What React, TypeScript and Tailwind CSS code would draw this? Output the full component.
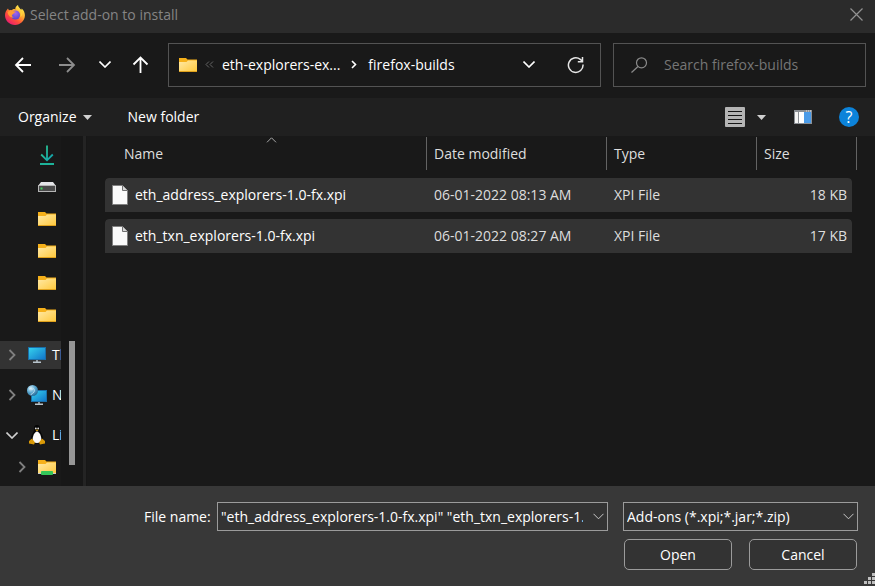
import type { ReactNode } from "react";

const files = [
  { name: "eth_address_explorers-1.0-fx.xpi", date: "06-01-2022 08:13 AM", type: "XPI File", size: "18 KB" },
  { name: "eth_txn_explorers-1.0-fx.xpi", date: "06-01-2022 08:27 AM", type: "XPI File", size: "17 KB" },
];

function FirefoxLogo() {
  return (
    <svg width="20" height="20" viewBox="0 0 20 20" aria-hidden="true">
      <defs>
        <linearGradient id="ffBody" x1="0.85" y1="0.1" x2="0.2" y2="0.95">
          <stop offset="0" stopColor="#fff44f" />
          <stop offset="0.35" stopColor="#ffa930" />
          <stop offset="0.65" stopColor="#ff5038" />
          <stop offset="1" stopColor="#e81a72" />
        </linearGradient>
        <radialGradient id="ffGlobe" cx="0.5" cy="0.3" r="0.8">
          <stop offset="0" stopColor="#a465f0" />
          <stop offset="1" stopColor="#4a42c8" />
        </radialGradient>
      </defs>
      <path d="M3 3.500c.4 1 .8 1.500 1.200 1.800C5 5 6 5 6.800 5.200 8 3.800 9.300 4 10.300 4.500 10 2.500 11.500.8 13 0c.2 2.200 2 3.200 3.200 4.800.4-.3.500-.8.400-1.300C19 5.500 20 8 19.900 10.600 19.700 15.900 15.400 20 10 20 4.500 20 0 15.800 0 10.300 0 7.500 1.200 5.200 3 3.500z" fill="url(#ffBody)" />
      <circle cx="10.500" cy="10" r="4.600" fill="url(#ffGlobe)" />
      <path d="M2.500 7.500c1.600-2 4-2.500 5.600-1.300 1.200.2 2.200.1 2.700.4-.1.800-1.200 1.200-2 1.600-.3 1-1.500 1-2 2 .3 1.200 1 1.800 2 2.200-2.500.8-5.300-.8-6.300-4.900z" fill="#ff9a34" />
      <path d="M12.500 3.500c3 2.500 4 5 2.800 8.500 1.500-.8 2.300-2.600 2.200-4.500-.8-1.800-2.800-3-5-4z" fill="#ffd23c" />
    </svg>
  );
}

function FolderIcon({ shared = false }: { shared?: boolean }) {
  return (
    <svg width="18" height="16" viewBox="0 0 18 16" aria-hidden="true" className="shrink-0">
      <defs>
        <linearGradient id="folderFront" x1="0" y1="0" x2="1" y2="1">
          <stop offset="0" stopColor="#ffe9a6" />
          <stop offset="1" stopColor="#ffc83a" />
        </linearGradient>
      </defs>
      <path d="M0 1h7l1.500 1.500H18V8H0z" fill="#f5b01a" />
      <path d="M0 5h7.500L9 3.500h9V15H0z" fill="url(#folderFront)" />
      <path d="M0 14.500h18" stroke="#e0a11c" />
      {shared && (
        <>
          <path d="M0 14.500h18" stroke="#c9cdd0" />
          <rect x="3" y="12" width="12" height="4" rx="1" fill="#35c759" />
        </>
      )}
    </svg>
  );
}

function DownloadIcon() {
  return (
    <svg width="18" height="22" viewBox="0 0 18 22" aria-hidden="true">
      <defs>
        <linearGradient id="dl" x1="0" y1="0" x2="1" y2="1">
          <stop offset="0" stopColor="#2fc98a" />
          <stop offset="1" stopColor="#0f9fb0" />
        </linearGradient>
      </defs>
      <path d="M9 1.500V16M3.200 10.500 9 16.300l5.800-5.800" fill="none" stroke="url(#dl)" strokeWidth="1.800" />
      <rect x="2" y="19" width="14" height="2" fill="#1db39a" />
    </svg>
  );
}

function DriveIcon() {
  return (
    <svg width="18" height="10" viewBox="0 0 18 10" aria-hidden="true">
      <path d="M3 0h12l3 4H0z" fill="#e4e5e8" />
      <rect x="0.500" y="3.500" width="17" height="6" fill="#4a4a4a" stroke="#b5b5b5" />
      <rect x="2.500" y="5.500" width="2" height="2" fill="#3fd45a" />
    </svg>
  );
}

function MonitorIcon() {
  return (
    <svg width="18" height="16" viewBox="0 0 18 16" aria-hidden="true" className="shrink-0">
      <defs>
        <linearGradient id="screen" x1="0" y1="0" x2="1" y2="1">
          <stop offset="0" stopColor="#35d3ee" />
          <stop offset="1" stopColor="#1173c8" />
        </linearGradient>
      </defs>
      <rect x="0.500" y="0.500" width="17" height="12" fill="url(#screen)" stroke="#1a6ea8" />
      <path d="M9 13v2M5 15.200h8" stroke="#b8c4cc" strokeWidth="1.400" />
    </svg>
  );
}

function NetworkIcon() {
  return (
    <svg width="20" height="20" viewBox="0 0 20 20" aria-hidden="true" className="shrink-0">
      <defs>
        <radialGradient id="globe" cx="0.350" cy="0.300" r="0.800">
          <stop offset="0" stopColor="#d8f0fa" />
          <stop offset="0.500" stopColor="#5ba7cf" />
          <stop offset="1" stopColor="#1c5d8c" />
        </radialGradient>
      </defs>
      <rect x="4.500" y="5.500" width="15" height="11" fill="url(#screen)" stroke="#1a6ea8" />
      <path d="M12 17v2M8 19.200h8" stroke="#b8c4cc" strokeWidth="1.400" />
      <circle cx="5.500" cy="5.500" r="5.500" fill="url(#globe)" />
      <path d="M2 4c2-1 3 1 4 0s2 1 1 3-3 1-3 3" fill="none" stroke="#e8f7ff" strokeOpacity="0.600" />
    </svg>
  );
}

function PenguinIcon() {
  return (
    <svg width="18" height="20" viewBox="0 0 18 20" aria-hidden="true" className="shrink-0">
      <path d="M9 0C6.500 0 5.800 2 6 4.500 6 7 3.500 9 3 13c-.2 2.500 1 5 3 5.500h6c2.500-.5 3.300-3 3-5.500-.5-4-3-6-3-8.500C12.200 2 11.500 0 9 0z" fill="#050505" />
      <path d="M9 6.500c-2.500.5-4.300 4.500-4.300 7.500S6.500 18 9 18s4.300-1 4.300-4S11.500 7 9 6.500z" fill="#fafafa" />
      <circle cx="7.800" cy="3.400" r="0.900" fill="#ddd" />
      <circle cx="10.200" cy="3.400" r="0.900" fill="#ddd" />
      <path d="M7.200 4.800h3.600L9 6.300z" fill="#e8a90a" />
      <path d="M1 16l3-2.500 3 4-1 2-5-1zM17 16l-3-2.500-3 4 1 2 5-1z" fill="#d99a08" />
    </svg>
  );
}

function FileIcon() {
  return (
    <svg width="16" height="20" viewBox="0 0 16 20" aria-hidden="true" className="shrink-0">
      <path d="M.5.5h10l5 5v14H.5z" fill="#fafafa" stroke="#808080" />
      <path d="M10.500.5v5h5" fill="#d8d8d8" stroke="#707070" />
    </svg>
  );
}

function Chevron({ dir }: { dir: "down" | "right" }) {
  return dir === "down" ? (
    <svg width="12" height="7" viewBox="0 0 12 7" aria-hidden="true">
      <path d="M.5.500l5.500 5.500L11.500.500" fill="none" stroke="currentColor" strokeWidth="1.600" />
    </svg>
  ) : (
    <svg width="8" height="12" viewBox="0 0 8 12" aria-hidden="true">
      <path d="M1.500 1l5 5-5 5" fill="none" stroke="currentColor" strokeWidth="1.800" />
    </svg>
  );
}

function ThinChevron() {
  return (
    <svg width="11" height="7" viewBox="0 0 11 7" aria-hidden="true">
      <path d="M.5.800l5 5 5-5" fill="none" stroke="#c8c8c8" />
    </svg>
  );
}

function Triangle() {
  return (
    <svg width="9" height="5" viewBox="0 0 9 5" aria-hidden="true">
      <path d="M0 0h9L4.500 5z" fill="#d0d0d0" />
    </svg>
  );
}

function IconButton({ label, className, children }: { label: string; className: string; children: ReactNode }) {
  return (
    <button type="button" aria-label={label} className={`flex shrink-0 items-center justify-center ${className}`}>
      {children}
    </button>
  );
}

function QuickItem({ label, children }: { label: string; children: ReactNode }) {
  return (
    <li className="flex h-8 items-center">
      <button type="button" aria-label={label} className="ml-9 flex w-[22px] justify-center">
        {children}
      </button>
    </li>
  );
}

function TreeItem({ text, selected = false, open = false, children }: { text: string; selected?: boolean; open?: boolean; children: ReactNode }) {
  return (
    <li className="flex h-8 items-center">
      <button type="button" className={`flex h-7 w-full items-center whitespace-nowrap ${selected ? "bg-[#333333]" : ""}`}>
        <span className={`ml-1.5 flex w-3 shrink-0 justify-center ${open ? "text-[#d0d0d0]" : "text-[#808080]"}`}>
          <Chevron dir={open ? "down" : "right"} />
        </span>
        <span className="ml-2 mr-1 flex w-[22px] shrink-0 justify-center">{children}</span>
        <span className="text-white">{text}</span>
      </button>
    </li>
  );
}

export default function App() {
  return (
    <div className="flex h-screen flex-col overflow-hidden bg-[#191919] font-['Open_Sans','Noto_Sans',sans-serif] text-sm leading-5 text-white">
      <header className="flex h-[33px] shrink-0 items-center bg-[#2b2b2b] pb-1 pl-[5px] pr-3">
        <FirefoxLogo />
        <h1 className="ml-[5px] flex-1 text-[#858585]">Select add-on to install</h1>
        <IconButton label="Close" className="">
          <svg width="13" height="13" viewBox="0 0 13 13" aria-hidden="true">
            <path d="M.5.5l12 12M12.500.5l-12 12" stroke="#929292" strokeWidth="1.200" />
          </svg>
        </IconButton>
      </header>

      <nav aria-label="Location" className="flex h-[65px] shrink-0 items-center gap-4 pb-0.5 pl-[9px] pr-[9px]">
        <IconButton label="Back" className="h-7 w-7">
          <svg width="18" height="16" viewBox="0 0 18 16" fill="none" stroke="#fff" strokeWidth="1.800" aria-hidden="true">
            <path d="M17 8H2M9 1L2 8l7 7" />
          </svg>
        </IconButton>
        <IconButton label="Forward" className="h-7 w-7">
          <svg width="18" height="16" viewBox="0 0 18 16" fill="none" stroke="#8d8d8d" strokeWidth="1.800" aria-hidden="true">
            <path d="M1 8h15M9 1l7 7-7 7" />
          </svg>
        </IconButton>
        <IconButton label="Recent locations" className="h-7 w-4">
          <Chevron dir="down" />
        </IconButton>
        <IconButton label="Up" className="h-7 w-[23px]">
          <svg width="17" height="17" viewBox="0 0 17 17" fill="none" stroke="#fff" strokeWidth="1.800" aria-hidden="true">
            <path d="M8.500 17V2M1.500 8.500l7-7 7 7" />
          </svg>
        </IconButton>
        <div className="flex h-11 min-w-0 flex-1 gap-3">
          <div className="flex min-w-0 flex-1 items-center border border-[#535353] pl-2.5 pr-4">
            <FolderIcon />
            <svg width="9" height="7" viewBox="0 0 9 7" fill="none" stroke="#666" aria-hidden="true" className="mx-2 shrink-0">
              <path d="M4 .500l-3 3 3 3M8 .500l-3 3 3 3" />
            </svg>
            <button type="button" className="whitespace-nowrap">eth-explorers-ex...</button>
            <svg width="6" height="9" viewBox="0 0 6 9" fill="none" stroke="#fff" strokeWidth="1.600" aria-hidden="true" className="mx-[11px] shrink-0">
              <path d="M1 1l3.500 3.500L1 8" />
            </svg>
            <button type="button" className="whitespace-nowrap">firefox-builds</button>
            <IconButton label="Previous locations" className="ml-auto">
              <Chevron dir="down" />
            </IconButton>
            <IconButton label="Refresh" className="ml-8">
              <svg width="17" height="18" viewBox="0 0 17 18" fill="none" stroke="#e6e6e6" strokeWidth="1.500" aria-hidden="true">
                <path d="M16 8.500A7.300 7.300 0 1 1 13.300 3.400L15.500 5.300M15.500 1v4.700h-4.700" />
              </svg>
            </IconButton>
          </div>
          <label className="flex w-[253px] items-center border border-[#535353] pl-4 pr-2">
            <svg width="18" height="16" viewBox="0 0 18 16" fill="none" stroke="#8a8a8a" strokeWidth="1.200" aria-hidden="true" className="shrink-0">
              <circle cx="11.500" cy="5.800" r="5" />
              <path d="M8 9.500L1.500 15.500" />
            </svg>
            <input type="search" aria-label="Search firefox-builds" placeholder="Search firefox-builds" className="ml-4 min-w-0 flex-1 bg-transparent outline-none placeholder:text-[#767676]" />
          </label>
        </div>
      </nav>

      <div role="toolbar" aria-label="Folder actions" className="flex h-[38px] shrink-0 items-center bg-[#202020] pl-[18px] pr-4">
        <button type="button" className="flex items-center gap-1.5">
          Organize <Triangle />
        </button>
        <button type="button" className="ml-9">New folder</button>
        <IconButton label="Change view" className="ml-auto">
          <svg width="20" height="20" viewBox="0 0 20 20" aria-hidden="true">
            <rect width="20" height="20" rx="1" fill="#b4b4b4" />
            <path d="M3 4.500h14M3 8.500h14M3 12.500h14M3 16.500h14" stroke="#151515" />
          </svg>
        </IconButton>
        <IconButton label="View options" className="ml-3">
          <Triangle />
        </IconButton>
        <IconButton label="Preview pane" className="ml-7">
          <svg width="18" height="14" viewBox="0 0 18 14" aria-hidden="true">
            <rect width="18" height="14" fill="#8b8f94" />
            <rect x="1" y="2" width="3" height="11" fill="#f4f4f4" />
            <rect x="5" y="2" width="5" height="11" fill="#fff" />
            <rect x="10" y="2" width="7" height="11" fill="#4a9be8" />
            <path d="M12 1h1M14 1h1M16 1h1" stroke="#e6e6e6" />
          </svg>
        </IconButton>
        <button type="button" aria-label="Help" className="ml-[27px] h-5 w-5 rounded-full bg-[#0c83da] text-center text-base leading-5">
          ?
        </button>
      </div>

      <main className="flex min-h-0 flex-1">
        <aside className="flex w-[87px] shrink-0 bg-[#171717]">
          <ul className="w-[61px] shrink-0 overflow-hidden bg-[#191919] pt-[3px]">
            <QuickItem label="Downloads"><DownloadIcon /></QuickItem>
            <QuickItem label="Drive"><DriveIcon /></QuickItem>
            <QuickItem label="Folder 1"><FolderIcon /></QuickItem>
            <QuickItem label="Folder 2"><FolderIcon /></QuickItem>
            <QuickItem label="Folder 3"><FolderIcon /></QuickItem>
            <QuickItem label="Folder 4"><FolderIcon /></QuickItem>
            <li className="mt-2">
              <ul className="flex flex-col gap-2">
                <TreeItem text="This PC" selected><MonitorIcon /></TreeItem>
                <TreeItem text="Network"><NetworkIcon /></TreeItem>
                <TreeItem text="Linux" open><PenguinIcon /></TreeItem>
              </ul>
            </li>
            <li className="flex h-8 items-center">
              <button type="button" aria-label="Linux folder" className="flex items-center gap-3 pl-[18px] text-[#808080]">
                <Chevron dir="right" />
                <FolderIcon shared />
              </button>
            </li>
          </ul>
          <div className="flex flex-1 flex-col items-center pb-[21px]">
            <div className="mt-auto h-[124px] w-1.5 bg-[#969696]" />
          </div>
          <div className="mr-px w-[3px] bg-[#242424]" />
        </aside>

        <section className="min-w-0 flex-1 px-[18px] pt-px">
          <table className="w-full table-fixed border-separate border-spacing-0 text-left">
            <colgroup>
              <col />
              <col className="w-[180px]" />
              <col className="w-[150px]" />
              <col className="w-24" />
              <col className="w-[5px]" />
            </colgroup>
            <thead>
              <tr className="h-[41px] align-top text-[#dedede]">
                <th scope="col" className="relative p-0 font-normal">
                  <button type="button" className="flex h-[33px] w-full items-center pl-[19px]">Name</button>
                  <svg width="11" height="6" viewBox="0 0 11 6" aria-hidden="true" className="absolute left-1/2 top-0">
                    <path d="M1 5.300L5.500.800 10 5.300" fill="none" stroke="#a8a8a8" />
                  </svg>
                </th>
                <th scope="col" className="p-0 font-normal">
                  <button type="button" className="flex h-[33px] w-full items-center border-l border-[#636363] pl-[7px]">Date modified</button>
                </th>
                <th scope="col" className="p-0 font-normal">
                  <button type="button" className="flex h-[33px] w-full items-center border-l border-[#636363] pl-[7px]">Type</button>
                </th>
                <th scope="col" className="p-0 font-normal">
                  <button type="button" className="flex h-[33px] w-full items-center border-l border-[#636363] pl-[7px]">Size</button>
                </th>
                <td className="p-0">
                  <div className="h-[33px] border-r border-[#636363]" />
                </td>
              </tr>
            </thead>
            <tbody>
              {files.map((file) => (
                <tr key={file.name} className="h-[41px] text-[#dedede]">
                  <td className="rounded-l-sm border-b-[7px] border-transparent bg-[#333333] bg-clip-padding p-0 pl-[7px] text-white">
                    <div className="flex items-center gap-[7px]">
                      <FileIcon />
                      {file.name}
                    </div>
                  </td>
                  <td className="border-b-[7px] border-transparent bg-[#333333] bg-clip-padding p-0 pl-2">{file.date}</td>
                  <td className="border-b-[7px] border-transparent bg-[#333333] bg-clip-padding p-0 pl-2">{file.type}</td>
                  <td className="rounded-r-sm border-b-[7px] border-transparent bg-[#333333] bg-clip-padding p-0 pr-[5px] text-right">{file.size}</td>
                  <td className="p-0" />
                </tr>
              ))}
            </tbody>
          </table>
        </section>
      </main>

      <footer className="relative flex h-[100px] shrink-0 flex-col gap-2 bg-[#383838] pl-36 pr-[17px] pt-4">
        <div className="flex items-center">
          <label htmlFor="filename" className="w-[73px] shrink-0 whitespace-nowrap">File name:</label>
          <div className="flex h-[29px] min-w-0 flex-1 items-center border border-[#9b9b9b] bg-[#333333] px-[3px]">
            <input id="filename" type="text" defaultValue={'"eth_address_explorers-1.0-fx.xpi" "eth_txn_explorers-1.0-fx.xpi"'} className="min-w-0 flex-1 bg-transparent outline-none" />
            <IconButton label="Recent file names" className="ml-2.5">
              <ThinChevron />
            </IconButton>
          </div>
          <div className="relative ml-[15px] w-[235px] shrink-0">
            <select aria-label="File type" className="h-[29px] w-full appearance-none border border-[#9b9b9b] bg-[#333333] pl-[3px] pr-6 outline-none">
              <option>Add-ons (*.xpi;*.jar;*.zip)</option>
            </select>
            <span className="pointer-events-none absolute inset-y-0 right-1 flex items-center">
              <ThinChevron />
            </span>
          </div>
        </div>
        <div className="flex justify-end gap-[17px] pr-px">
          <button type="button" className="h-[31px] w-[108px] rounded-[5px] border border-[#9b9b9b] bg-[#333333]">Open</button>
          <button type="button" className="h-[31px] w-[108px] rounded-[5px] border border-[#9b9b9b] bg-[#333333]">Cancel</button>
        </div>
        <svg width="11" height="11" viewBox="0 0 11 11" aria-hidden="true" className="absolute bottom-0.5 right-0" fill="#bfbfbf">
          <path d="M8 0h3v3H8zM4 4h3v3H4zM8 4h3v3H8zM0 8h3v3H0zM4 8h3v3H4zM8 8h3v3H8z" />
        </svg>
      </footer>
    </div>
  );
}
